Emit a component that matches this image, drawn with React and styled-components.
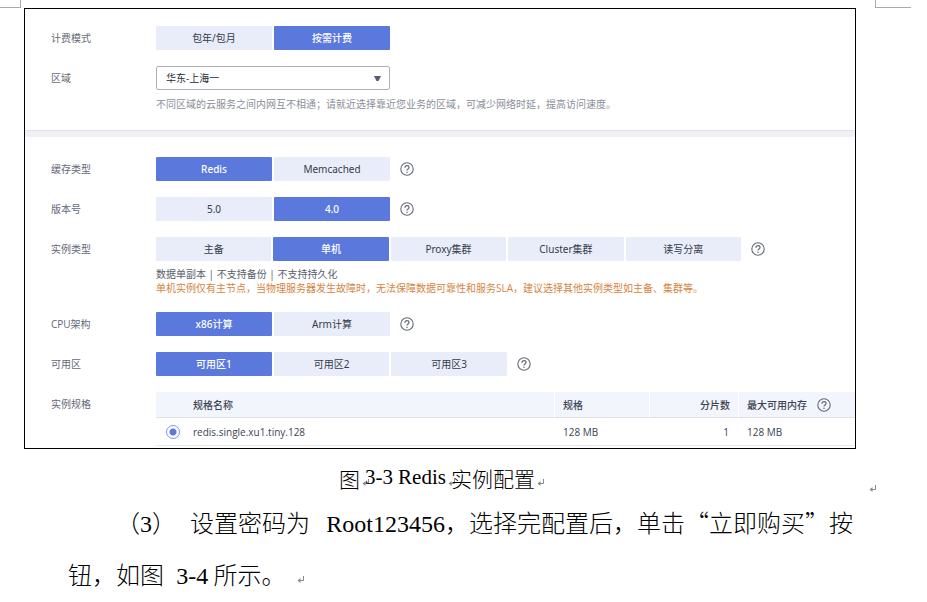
import { useState } from "react";
import styled, { createGlobalStyle } from "styled-components";

const GlobalStyle = createGlobalStyle`
  * {
    box-sizing: border-box;
  }

  body {
    margin: 0;
    background-color: #fff;
  }
`;

const Page = styled.main`
  overflow: hidden;
`;

const Corners = styled.div`
  display: flex;
  justify-content: space-between;
  height: 8px;
  padding-right: 16px;
`;

const CornerLeft = styled.div`
  width: 21px;
  border: solid #aaa;
  border-width: 0 1px 1px 0;
`;

const CornerRight = styled.div`
  width: 36px;
  border: solid #aaa;
  border-width: 0 0 1px 1px;
`;

const Figure = styled.figure`
  margin: 0 71px 0 24px;
`;

const Console = styled.form`
  border: 1px solid #000;
  font-family: "Open Sans", "Noto Sans CJK SC", sans-serif;
  font-size: 10px;
  line-height: 14px;
  color: #3d4455;
`;

const Section = styled.section`
  display: flex;
  flex-direction: column;
  gap: 16px;
  padding: 17px 0 19px 26px;
`;

const SpecSection = styled(Section)`
  padding: 20px 0 2px 26px;
`;

const Divider = styled.div`
  height: 7px;
  background-color: #eef0f6;
  border-top: 1px solid #e0e1e6;
`;

const Row = styled.div`
  display: flex;
  align-items: flex-start;
`;

const Label = styled.label`
  flex: none;
  width: 105px;
  line-height: 24px;
  color: #636978;
`;

const Field = styled.div`
  flex: 1;
  min-width: 0;
`;

const Line = styled.div`
  display: flex;
  align-items: center;
  gap: 10px;
`;

const Segments = styled.div`
  display: flex;
  gap: 2px;
  width: ${({ $count }) => $count * 117}px;
`;

const Segment = styled.button`
  flex: 1;
  height: 24px;
  padding: 0;
  border: none;
  border-radius: 1px;
  background-color: ${({ $active }) => ($active ? "#5b79dd" : "#e9edf9")};
  color: ${({ $active }) => ($active ? "#fff" : "#353b4b")};
  font: 10px/14px "Noto Sans", "Noto Sans CJK SC", sans-serif;
  font-weight: ${({ $active }) => ($active ? 500 : 400)};
  cursor: pointer;
`;

const HelpButton = styled.button`
  display: flex;
  padding: 0;
  border: none;
  background: none;
  color: #646a77;
`;

const SelectBox = styled.div`
  display: flex;
  align-items: center;
  width: 234px;
  height: 24px;
  border: 1px solid #adb0b8;
  border-radius: 2px;
`;

const Select = styled.select`
  flex: 1;
  height: 22px;
  margin-right: -18px;
  padding: 0 24px 0 9px;
  border: none;
  background: none;
  appearance: none;
  font: inherit;
  color: #252b3a;
`;

const Arrow = styled.svg`
  flex: none;
  margin-right: 8px;
  pointer-events: none;
`;

const Hint = styled.p`
  margin: 7px 0 0;
  color: #8a8e99;
`;

const Notes = styled.div`
  padding: 6px 0 1px;
`;

const Note = styled.p`
  margin: 0;
  color: ${({ $warning }) => ($warning ? "#d6843f" : "#575d6c")};
`;

const Table = styled.table`
  width: 100%;
  border-collapse: separate;
  border-spacing: 0;
  table-layout: fixed;
`;

const Th = styled.th`
  width: ${({ $width }) => $width};
  height: 26px;
  padding: 0 8px;
  background-color: #f2f5fc;
  border-bottom: 1px solid #dfe1e6;
  border-left: 1px solid ${({ $divided }) => ($divided ? "#fff" : "#f2f5fc")};
  font-weight: 500;
  text-align: ${({ $align }) => $align || "left"};
`;

const Td = styled.td`
  height: 28px;
  padding: 0 9px;
  border-bottom: 1px solid #e6e7ea;
  text-align: ${({ $align }) => $align || "left"};
`;

const Radio = styled.input`
  display: block;
  width: 14px;
  height: 14px;
  margin: 0 0 0 1px;
  border: 1px solid #7f97e6;
  border-radius: 50%;
  appearance: none;
  background: radial-gradient(circle, #5b79dd 3px, transparent 4px);
`;

const CaptionRow = styled.div`
  display: flex;
  align-items: center;
  height: 47px;
  padding-right: 50px;
`;

const Caption = styled.div`
  flex: 1;
  display: flex;
  justify-content: center;
  align-items: baseline;
  margin: 10px 21px 0 36px;
  font: 21px/32px "Noto Sans CJK SC", sans-serif;
  font-weight: 300;
  color: #000;
`;

const Latin = styled.span`
  font-family: "Liberation Serif", serif;
  font-weight: 400;
  line-height: 1;
`;

const Raised = styled(Latin)`
  align-self: flex-start;
  margin-right: ${({ $after }) => ($after ? "5px" : "0")};
  line-height: 30px;
`;

const ReturnMark = styled.svg`
  flex: none;
  margin: 0 ${({ $overlap }) => ($overlap ? "-5px" : "0")} 0 2px;
`;

const LineMark = styled(ReturnMark)`
  margin: 32px 0 0;
`;

const Paragraph = styled.p`
  margin: 0 71px 0 68px;
  text-indent: 48px;
  text-spacing-trim: space-all;
  font: 24px/52px "Noto Sans CJK SC", sans-serif;
  font-weight: 300;
  color: #000;
`;

const Spaced = styled.span`
  margin-left: 14px;
`;

const Word = styled(Latin)`
  margin-left: ${({ $wide }) => ($wide ? "11px" : "7px")};
`;

const EndMark = styled(ReturnMark)`
  margin-left: 6px;
`;

function Help() {
  return (
    <HelpButton type="button" aria-label="帮助">
      <svg width="14" height="14" viewBox="0 0 14 14" fill="none" stroke="currentColor">
        <circle cx="7" cy="7" r="6.2" strokeWidth="1.1" />
        <path d="M5 5.7C5 4.4 5.8 3.7 7 3.7s2 .7 2 1.8C9 6.9 7 7 7 8.5" strokeWidth="1.2" />
        <circle cx="7" cy="10.2" r=".75" fill="currentColor" stroke="none" />
      </svg>
    </HelpButton>
  );
}

function Return({ as: Mark = ReturnMark, ...props }) {
  return (
    <Mark width="8" height="8" viewBox="0 0 8 8" fill="none" stroke="#888" aria-hidden="true" {...props}>
      <path d="M6.5 0v4.5H2" />
      <path d="M3.5 2v5L.5 4.5z" fill="#888" stroke="none" />
    </Mark>
  );
}

function Choice({ label, options, initial, help, children }) {
  const [value, setValue] = useState(initial);

  return (
    <Row>
      <Label as="span">{label}</Label>
      <Field>
        <Line>
          <Segments $count={options.length} role="group" aria-label={label}>
            {options.map((option) => (
              <Segment
                key={option}
                type="button"
                $active={option === value}
                aria-pressed={option === value}
                onClick={() => setValue(option)}
              >
                {option}
              </Segment>
            ))}
          </Segments>
          {help && <Help />}
        </Line>
        {children}
      </Field>
    </Row>
  );
}

function App() {
  return (
    <Page lang="zh-CN">
      <GlobalStyle />
      <Corners>
        <CornerLeft />
        <CornerRight />
      </Corners>
      <Figure>
        <Console>
          <Section>
            <Choice label="计费模式" options={["包年/包月", "按需计费"]} initial="按需计费" />
            <Row>
              <Label htmlFor="region">区域</Label>
              <Field>
                <SelectBox>
                  <Select id="region">
                    <option>华东-上海一</option>
                  </Select>
                  <Arrow width="7" height="5" viewBox="0 0 7 5">
                    <path d="M0 0h7L4.5 5h-2z" fill="#575d6c" />
                  </Arrow>
                </SelectBox>
                <Hint>
                  不同区域的云服务之间内网互不相通；请就近选择靠近您业务的区域，可减少网络时延，提高访问速度。
                </Hint>
              </Field>
            </Row>
          </Section>
          <Divider />
          <SpecSection>
            <Choice label="缓存类型" options={["Redis", "Memcached"]} initial="Redis" help />
            <Choice label="版本号" options={["5.0", "4.0"]} initial="4.0" help />
            <Choice
              label="实例类型"
              options={["主备", "单机", "Proxy集群", "Cluster集群", "读写分离"]}
              initial="单机"
              help
            >
              <Notes>
                <Note>数据单副本 | 不支持备份 | 不支持持久化</Note>
                <Note $warning>
                  单机实例仅有主节点，当物理服务器发生故障时，无法保障数据可靠性和服务SLA，建议选择其他实例类型如主备、集群等。
                </Note>
              </Notes>
            </Choice>
            <Choice label="CPU架构" options={["x86计算", "Arm计算"]} initial="x86计算" help />
            <Choice label="可用区" options={["可用区1", "可用区2", "可用区3"]} initial="可用区1" help />
            <Row>
              <Label as="span">实例规格</Label>
              <Field>
                <Table>
                  <thead>
                    <tr>
                      <Th $width="28px" aria-label="选择" />
                      <Th>规格名称</Th>
                      <Th $width="95px" $divided>规格</Th>
                      <Th $width="89px" $divided $align="right">分片数</Th>
                      <Th $width="117px" $divided>
                        <Line>
                          最大可用内存
                          <Help />
                        </Line>
                      </Th>
                    </tr>
                  </thead>
                  <tbody>
                    <tr>
                      <Td>
                        <Radio
                          type="radio"
                          name="spec"
                          aria-label="redis.single.xu1.tiny.128"
                          defaultChecked
                        />
                      </Td>
                      <Td>redis.single.xu1.tiny.128</Td>
                      <Td>128 MB</Td>
                      <Td $align="right">1</Td>
                      <Td>128 MB</Td>
                    </tr>
                  </tbody>
                </Table>
              </Field>
            </Row>
          </SpecSection>
        </Console>
      </Figure>
      <CaptionRow>
        <Caption>
          图
          <Return $overlap />
          <Raised $after>3-3</Raised>
          <Raised>Redis</Raised>
          <Return $overlap />
          实例配置
          <Return />
        </Caption>
        <Return as={LineMark} />
      </CaptionRow>
      <Paragraph>
        （<Latin>3</Latin>）<Spaced>设置密码为</Spaced>{" "}
        <Word $wide>Root123456</Word>，选择完配置后，单击“立即购买”按钮，如图{" "}
        <Word>3-4</Word> 所示。{" "}
        <Return as={EndMark} />
      </Paragraph>
    </Page>
  );
}

export default App;
